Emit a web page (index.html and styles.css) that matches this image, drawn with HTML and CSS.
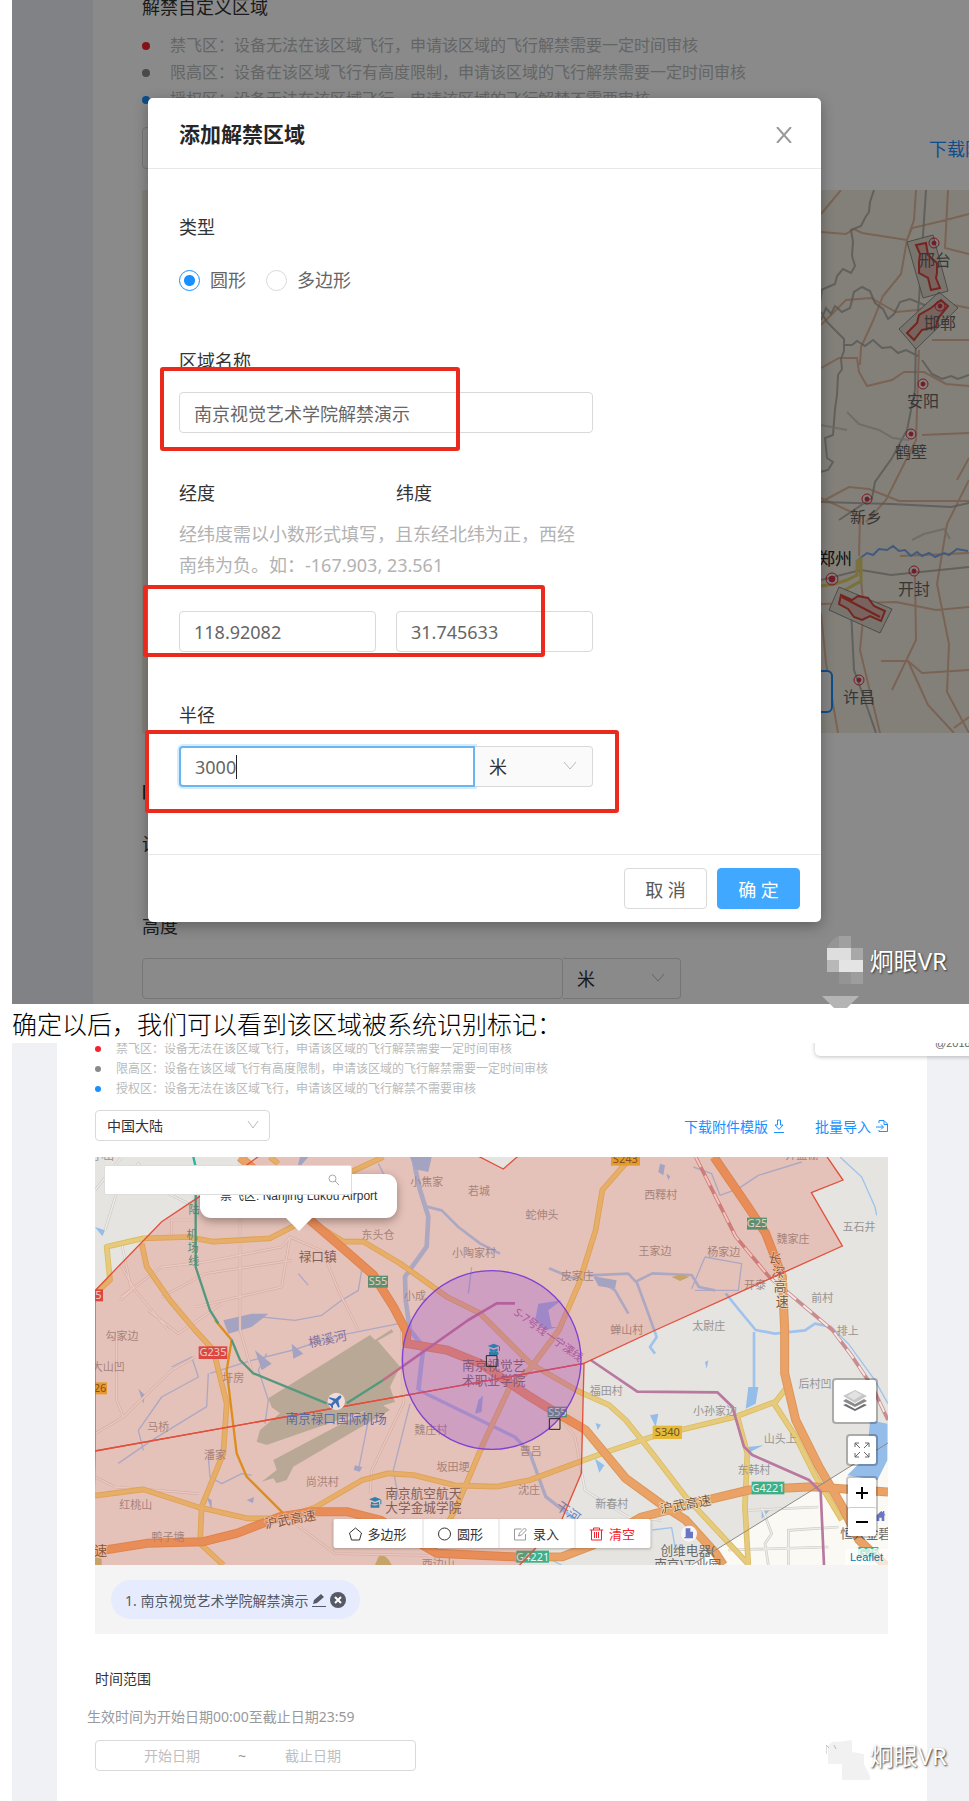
FILE: index.html
```html
<!DOCTYPE html>
<html lang="zh-CN">
<head>
  <meta charset="UTF-8" />
  <meta name="viewport" content="width=device-width, initial-scale=1.0"/>
  <title>解禁申请教程</title>
  <link rel="stylesheet" href="styles.css">
</head>
<body>
  <article>
    <!-- Step 1: add area dialog -->
    <section class="shot shot-large">
      <div class="page">
        <h2>解禁自定义区域</h2>
        <ul class="zones">
          <li class="red">禁飞区：设备无法在该区域飞行，申请该区域的飞行解禁需要一定时间审核</li>
          <li class="gray">限高区：设备在该区域飞行有高度限制，申请该区域的飞行解禁需要一定时间审核</li>
          <li class="blue">授权区：设备无法在该区域飞行，申请该区域的飞行解禁不需要审核</li>
        </ul>
        <div class="toolbar">
          <div class="select-wrap"><select aria-label="国家地区"><option>中国大陆</option></select></div>
          <a href="#">下载附件模版
            <svg width="16" height="16" viewBox="0 0 16 16" fill="none" stroke="currentColor"><path d="M6 1h4v6h3l-5 5-5-5h3zM3 15h10"/></svg>
          </a>
        </div>
        <svg class="map-back" viewBox="0 0 917 543" preserveAspectRatio="xMinYMin slice">
          <rect width="917" height="543" fill="#f2ede1"/>
          <g fill="none" stroke="#dca583" stroke-width="2" stroke-opacity=".75">
            <path d="M679 42l25 2 8-5 8 4 45 7M774 0l-2 30-7 20-6 34-18 22-10 25-12 26-1 18M679 24l20-24M806 0l-3 58 24 6M765 50l5-12 30-7 27-7M679 135l25-25 25-2 25 14 22-2 20-8 31 6M679 178l18-10h18l2 14 8 14 25-6 12-8h20l22 12 23 2M790 150l37 0M780 245l47-2M815 290l12-22M679 312l28-15 20 2 30 12 70 0M758 366l69-3M717 366l1-40-39-18M679 414l75-2 40 8 33-3M750 500l24-50-1-64M827 290l-22 44-10 60 12 60-2 48 22 41M696 543l-12-70-5-50M717 370l5 50-4 40 20 83M739 471h27l14 12 47-3M766 471l20 44 26 28M777 160l-3 90-30 60-20 22M812 538l15-11"/>
          </g>
          <g fill="none" stroke="#a5a39c" stroke-width="2" stroke-opacity=".8">
            <path d="M732 0l-4 12-1 10-4 6-4 8-10 4 2 12-1 14 3 10-4 7-8-4-6 7-2 8-14 6M679 130l5-12 5 6 4-8 7 6 8-4 4-16 8-5 8 4 5 12 8 6 5 10 6-5 6-12 10-3 12 5 8 3M679 122l6 10 8 8 9 9 0 12-3 8 1 10-4 6-1 20-2 14-2 26-8 3 2 20 6 4-5 8-8 2M702 155l8 0 5-4 8 5 8-6 9 8 9-1 7 6 8-3 12 6M784 0l-4 60-3 50-3 30-1 60-8 40-15 28-17 24-3 16-33 22M679 312l70 2 60 3 18-4M679 390l40-10 30 5 78-8M709 420l3 60 10 28 12 35M780 170l10 14 10 5 9-3 7 3 11-4M680 100l-2 12"/>
            <path d="M705 222l12 12 20 6 14 8 16 2M679 235l26 5M770 350l12-6 20-5 6 10" stroke="#c4c2ba"/>
          </g>
          <path d="M717 369l8-6 6 2 6-6 8 1 6-4 6 5 6-1 6 6 6-4 5 4 7-3 6 4 9-4 5 2 8-6 11 2" fill="none" stroke="#7aa7e8" stroke-width="2"/>
          <path d="M679 396l14-2 12-4 10-5v-14l4-2v22l-18 10" fill="none" stroke="#e2cf6a" stroke-width="3"/>
          <g fill="#ddd8cc" stroke="#8c8c86" stroke-width="1">
            <path d="M765 52l26-7 15 56-25 7zM757 139l40-37 19 16-42 41zM697 397l53 22-12 24-51-23z"/>
          </g>
          <g fill="#dfb8ae" stroke="#d8453c" stroke-width="2">
            <path d="M774 55l10-2 2 12 9 8v10l-1 5 4 10-9 2-3-12-9-5V72l1-8z"/>
            <path d="M799 110l7 6-9 11-3 10-14 3-8 10-7-7 10-10 2-8 12-7z"/>
            <path d="M699 405l11 5 6-4 10 2 6 8 11 5-4 10-11-5-8 4-8-3-6-8-9-5zM700 407l38 20"/>
          </g>
          <g fill="#d9304c" stroke="#d9304c">
            <g fill="none" stroke-width="1"><circle cx="792" cy="53" r="5"/><circle cx="798" cy="116" r="5"/><circle cx="781" cy="194" r="5"/><circle cx="769" cy="244" r="5"/><circle cx="725" cy="309" r="5"/><circle cx="690" cy="389" r="6"/><circle cx="772" cy="381" r="5"/><circle cx="717" cy="490" r="5"/></g>
            <circle cx="792" cy="53" r="2"/><circle cx="798" cy="116" r="2"/><circle cx="781" cy="194" r="2"/><circle cx="769" cy="244" r="2"/><circle cx="725" cy="309" r="2"/><circle cx="690" cy="389" r="3"/><circle cx="772" cy="381" r="2"/><circle cx="717" cy="490" r="2"/>
          </g>
          <g class="city">
            <text x="793" y="76">邢台</text><text x="798" y="139">邯郸</text><text x="781" y="217">安阳</text><text x="769" y="268">鹤壁</text>
            <text x="724" y="333">新乡</text><text x="693" y="375" class="capital">郑州</text><text x="772" y="405">开封</text><text x="717" y="513">许昌</text>
          </g>
          <rect x="400" y="481" width="290" height="41" rx="5" fill="#f4f4f4" stroke="#1890ff" stroke-width="2"/>
        </svg>
        <h3 class="bold">时间范围</h3>
        <p class="note">设</p>
        <h3 class="height-label"><label for="height">高度</label></h3>
        <div class="group height-group">
          <input id="height" type="text">
          <div class="select-wrap unit">
            <select aria-label="高度单位"><option>米</option></select>
            <svg class="chevron" viewBox="0 0 14 14"><path d="M1 3l6 7 6-7"/></svg>
          </div>
        </div>
      </div>

      <div class="mask">
        <form class="modal">
          <header>
            <h1>添加解禁区域</h1>
            <button type="button" class="close" aria-label="关闭"><svg width="16" height="16" viewBox="0 0 16 16"><path d="M1 0l14 16M15 0L1 16"/></svg></button>
          </header>
          <div class="modal-body">
            <div class="label">类型</div>
            <div class="radios">
              <label><input type="radio" name="shape" checked>圆形</label>
              <label><input type="radio" name="shape">多边形</label>
            </div>
            <label class="label name-label" for="area">区域名称</label>
            <input id="area" type="text" value="南京视觉艺术学院解禁演示">
            <div class="coords coord-labels">
              <label class="label" for="lng">经度</label>
              <label class="label" for="lat">纬度</label>
            </div>
            <p class="help">经纬度需以小数形式填写，且东经北纬为正，西经南纬为负。如：-167.903, 23.561</p>
            <div class="coords">
              <input id="lng" type="text" value="118.92082">
              <input id="lat" type="text" value="31.745633">
            </div>
            <label class="label radius-label" for="radius">半径</label>
            <div class="group">
              <div class="radius"><input id="radius" type="text" value="3000"><span class="caret"></span></div>
              <div class="select-wrap unit">
                <select aria-label="半径单位"><option>米</option></select>
                <svg class="chevron" viewBox="0 0 14 14"><path d="M1 3l6 7 6-7"/></svg>
              </div>
            </div>
          </div>
          <footer>
            <button type="button">取 消</button>
            <button type="button" class="primary">确 定</button>
          </footer>
          <span class="mark mark-name"></span>
          <span class="mark mark-coords"></span>
          <span class="mark mark-radius"></span>
        </form>
      </div>
    </section>
    <div class="watermark watermark-top">
      <svg width="42" height="72" viewBox="0 0 42 72">
        <path d="M5 12Q10 2 17 0v12z" fill="#959595"/><path d="M17 0h12v12H17z" fill="#a0a0a0"/>
        <path d="M5 12h24v12H5z" fill="#dedede"/><path d="M29 12h12v12H29z" fill="#a8a8a8"/>
        <path d="M5 24h12v12H5z" fill="#b8b8b8"/><path d="M17 24h24v12H17z" fill="#e4e4e4"/>
        <path d="M17 36h12v12H17z" fill="#949494"/><path d="M29 36h12v12H29z" fill="#9d9d9d"/>
        <path d="M0 60h37L25 72H12z" fill="#b4b4b4"/>
      </svg>
      <span>炯眼VR</span>
    </div>

    <p class="caption">确定以后，我们可以看到该区域被系统识别标记：</p>

    <!-- Step 2: area marked on the map -->
    <section class="shot shot-small">
      <div class="page">
        <ul class="zones">
          <li class="red">禁飞区：设备无法在该区域飞行，申请该区域的飞行解禁需要一定时间审核</li>
          <li class="gray">限高区：设备在该区域飞行有高度限制，申请该区域的飞行解禁需要一定时间审核</li>
          <li class="blue">授权区：设备无法在该区域飞行，申请该区域的飞行解禁不需要审核</li>
        </ul>
        <div class="toolbar">
          <div class="select-wrap">
            <select aria-label="国家地区"><option>中国大陆</option></select>
            <svg class="chevron" viewBox="0 0 14 14"><path d="M2 3l5 7 5-7"/></svg>
          </div>
          <div class="links">
            <a href="#">下载附件模版
              <svg width="12" height="14" viewBox="0 0 12 14" fill="none" stroke="currentColor"><path d="M4.500 1h3v5H10L6 10.500 2 6h2.500zM1 13.500h10"/></svg>
            </a>
            <a href="#">批量导入
              <svg width="12" height="14" viewBox="0 0 12 14" fill="none" stroke="currentColor"><path d="M3 4V1.500h5l3.500 3.500v7.500H3V11M8 2v3.500h3M0 8h7M5 5.500L7.500 8 5 10.500"/></svg>
            </a>
          </div>
        </div>

        <div class="map">
          <svg class="tiles" viewBox="0 0 2379 1224" preserveAspectRatio="xMidYMid slice">
            <defs>
              <path id="roads" d="M0 410L45 369 35 269 145 244 280 240 355 254 525 244 620 195M140 259L155 329 225 430 300 519 355 579 395 739 385 889 320 1049 315 1159 385 1224M625 179L745 254 805 254 915 319 1055 419 1155 469 1305 619 1452 704 1542 744 1592 789 1672 889 1772 1019 1962 1224M1592 19L1522 99 1502 219 1452 379 1392 519 1302 639 1245 689 1165 859 1085 1049 1010 1190M0 1016L145 997 305 1049 455 1084 555 1084 655 1054 800 970 880 949 955 954 1080 985 1205 989 1305 969 1522 889 1672 839 1922 779 2042 734 2085 679M2037 739L2102 839 2162 959 2240 1089M1927 779L1957 889 1950 1050 1960 1224M770 44L865 0M525 0L550 20"/>
              <path id="highways" d="M435 0L475 35 645 189 755 284 835 354 895 449 935 525 935 560 1055 579 1155 619 1305 719 1362 754 1472 819 1592 964 1702 1044 1772 1089 1862 1189 1885 1224M1857 0L1952 139 2012 229 2062 359 2069 519V649L2102 789 2172 929 2242 1049 2292 1149 2379 1232M0 1184L155 1159 325 1154 425 1129 555 1079 655 1064 755 1064 855 1089 1025 1189 1265 1200 1402 1199 1492 1165 1640 1080 1857 1024 1962 999 2152 989 2379 1005"/>
            </defs>
            <rect width="2379" height="1224" fill="#e5e4e0"/>
            <path d="M2379 858L1862 1179 1790 1224H2379z" fill="#fbf9f4"/>
            <!-- airport ground -->
            <path fill="#afc4b4" d="M520 724L825 534 840 549 890 517 895 525 848 551 915 629 885 689 900 735 800 765 515 864 485 854 495 819 555 769 530 751zM500 974L545 939 535 909 855 739 885 759 595 929 575 969 545 979 535 964z"/>
            <!-- water -->
            <g fill="none" stroke="#9fc3ec" stroke-width="8" stroke-linejoin="round">
              <path stroke-width="14" d="M955 0L962 40 975 99 1000 179 995 269 930 359 932 430 945 519 985 570 970 699"/>
              <path stroke-width="10" d="M970 699L1155 789 1260 840 1305 889 1352 1019 1442 1089"/>
              <path d="M995 149L1040 160 1090 210 1155 259 1215 290M1362 334L1440 366M1480 355L1600 350 1622 374 1672 349 1790 354 1812 390 1860 400M1892 409L1925 450 1982 519 2040 530 2130 520 2160 500 2210 510M1500 360L1560 400 1600 470M1625 375L1660 470 1685 540 1665 570 1680 590M1977 525V700"/>
              <path stroke-width="4" d="M345 649L470 610 595 579 715 539 915 499M70 919L170 850 335 749 340 649M515 589L490 639 520 729 510 800M340 900L345 960 380 980 440 950 470 955M945 740L895 940 910 1020M820 790L790 940M2235 0L2300 60 2340 150 2345 175M2210 510L2260 560 2340 670 2379 740M1310 1179L1400 1224M1672 1119L1730 1112 1740 1170M500 480L600 490 680 475 740 430 790 400 800 340M610 350L640 385M1130 330L1120 410M850 20L870 60M1795 30L1850 50 1875 115 1930 95 1990 55 2120 15M1790 395L1830 300 1940 320 1930 400 1800 400M230 630L290 600 310 660 200 720 130 820 145 880"/>
            </g>
            <g fill="#94bdea">
              <path d="M385 490L470 470 520 470 470 510 400 530zM1330 440L1400 430 1360 460 1370 510 1390 510 1350 520 1320 490zM945 0h65l-10 45-40-8zM1495 358l70 12-5 25-50-8zM480 580l50 40-30 20zM590 560l35 30-30 15zM130 695l20 20-5 25zM335 1020l15 10v30zM780 925l22 5-8 14-18-5zM1960 690l30 0-8 50-30 15zM1665 775l25-5-8 40zM1500 905l28 20-15 22zM1502 798l16 5-10 16zM1830 615l10-5-5 25zM1960 870l45-5-40 20zM2000 1060l25-2-25 28zM2325 790l52 10v110l-30 60-90-15 60-60zM1695 20l15 5-5 30-15-10zM1714 50l12 8-6 12zM0 210l30 10-8 18zM1150 730l14-15-4 50-20 5zM455 1030l22-10-3 18zM615 0l25 0-35 40z"/>
            </g>
            <path d="M1730 360l28-8 25 8-28 12zM0 1200l20 5v19H0zM850 1200q20-15 40 24h-50z" fill="#bdbd7c"/>
            <!-- small streets -->
            <g fill="none" stroke="#cfcbc6" stroke-width="8">
              <path id="streets" d="M0 100L80 0M70 90L30 220M70 90L130 20 180 90 300 150M435 0V519L470 640M230 244v-55h70M80 260L110 400 75 430M75 320L120 400 220 519M80 419L200 330 330 315 560 270 585 240M200 420L330 350 590 310M300 450L560 390 585 240 700 290M690 300L730 400 790 519M65 519L65 730 85 780 0 830M85 780L230 640 300 600M160 460L250 530 380 440M0 960l60 30 250 20M560 1069L720 1190 1000 1195M920 519L925 740 830 940 825 1010M1380 760L1440 840 1470 1000 1600 1080 1700 1090M2000 1050L2030 1130 2010 1160 2020 1224M2080 1224V1120L2230 1110M1960 1060L2170 1050M1900 1179L2200 1170"/>
            </g>
            <use href="#streets" fill="none" stroke="#eeecea" stroke-width="4"/>
            <!-- provincial roads and highways -->
            <use href="#roads" class="road-edge"/>
            <use href="#roads" class="road"/>
            <use href="#highways" class="highway-edge"/>
            <use href="#highways" class="highway"/>
            <!-- rail and metro -->
            <g fill="none" stroke-linejoin="round">
              <path d="M1802 0L1872 139 1922 239 2022 359 2212 519 2272 599 2332 689 2379 789" stroke="#c98d90" stroke-width="11"/>
              <path d="M1802 0L1872 139 1922 239 2022 359 2212 519 2272 599 2332 689 2379 789" stroke="#f3e9e6" stroke-width="6" stroke-dasharray="34 28"/>
              <path d="M360 489L410 549 395 640 425 889 455 959 565 1069" stroke="#dda21c" stroke-width="7"/>
              <path d="M295 0L302 30V330L345 460 370 499M410 549L435 609 475 649 695 739M755 739L865 669" stroke="#30b096" stroke-width="7"/>
              <path d="M865 669L1120 489 1205 439H1260M1487 609L1627 704 1867 706 1912 749 1947 869 1972 894 2142 969 2177 1004 2187 1224" stroke="#b9789f" stroke-width="8"/>
            </g>
            <g class="village">
              <text x="995" y="88">小焦家</text><text x="1152" y="113">若城</text><text x="849" y="247">东头仓</text><text x="1137" y="300">小陶家村</text><text x="960" y="428">小成</text>
              <text x="1341" y="187">蛇伸头</text><text x="1697" y="125">西釋村</text><text x="1680" y="294">王家边</text><text x="1886" y="298">杨家边</text><text x="2094" y="259">魏家庄</text><text x="2292" y="222">五石井</text>
              <text x="1447" y="368">皮家庄</text><text x="1980" y="396">开泰</text><text x="2182" y="435">前村</text><text x="1595" y="531">蝉山村</text><text x="1841" y="519">太尉庄</text><text x="2258" y="534">排上</text>
              <text x="81" y="548">勾家边</text><text x="40" y="643">大山凹</text><text x="415" y="676">圩房</text><text x="190" y="823">马桥</text><text x="360" y="905">潘家</text><text x="1007" y="831">魏庄村</text><text x="1074" y="941">坂田埂</text>
              <text x="682" y="988">尚洪村</text><text x="122" y="1056">红桃山</text><text x="219" y="1152">鸭子塘</text><text x="1302" y="1012">沈庄</text><text x="1307" y="894">曹吕</text><text x="1534" y="713">福田村</text><text x="1860" y="774">小孙家边</text>
              <text x="2160" y="692">后村凹</text><text x="2056" y="859">山头上</text><text x="1977" y="950">东韩村</text><text x="1550" y="1052">新春村</text><text x="1030" y="1234">西边山</text><text x="2120" y="6">井盖棚</text><text x="25" y="10">小山</text>
            </g>
            <g class="town">
              <text x="668" y="311">禄口镇</text><text x="985" y="1022">南京航空航天</text><text x="985" y="1066">大学金城学院</text>
              <text x="1196" y="640">南京视觉艺</text><text x="1196" y="684">术职业学院</text><text x="1778" y="1193">创维电器(</text><text x="1778" y="1236">南京)工业园</text><text x="2312" y="1142">恒大金碧</text>
            </g>
            <g class="roadname">
              <text x="588" y="1101" transform="rotate(-10 588 1101)">沪武高速</text><text x="1774" y="1056" transform="rotate(-10 1774 1056)">沪武高速</text>
              <text x="2037" y="318" transform="rotate(12 2037 318)">长</text><text x="2048" y="360" transform="rotate(8 2048 360)">深</text><text x="2056" y="402">高</text><text x="2062" y="448">速</text><text x="17" y="1193">速</text>
            </g>
            <g class="metro"><text x="297" y="172">陆</text><text x="291" y="246">机</text><text x="294" y="286">场</text><text x="296" y="324">线</text></g>
            <text class="river" x="698" y="560" transform="rotate(-12 698 546)">横溪河</text>
            <text class="river" x="1412" y="1076" transform="rotate(35 1412 1076)">干河</text>
            <text class="line-name" x="1360" y="545" transform="rotate(36 1360 535)">S-7号线一宁溧线</text>
            <!-- road shields -->
            <g>
              <rect x="819" y="356" width="60" height="36" fill="#3da385"/><rect x="1956" y="182" width="60" height="36" fill="#3da385"/><rect x="1358" y="749" width="58" height="32" fill="#3da385"/><rect x="1970" y="974" width="98" height="38" fill="#3daf8b"/><rect x="1264" y="1181" width="98" height="36" fill="#3daf8b"/><rect x="2290" y="1170" width="60" height="30" fill="#3daf8b"/>
              <rect x="311" y="568" width="86" height="38" fill="#dc4a4a"/><rect x="-30" y="397" width="54" height="36" fill="#dc4a4a"/><rect x="1548" y="-10" width="87" height="36" fill="#e7b22d"/><rect x="1673" y="806" width="88" height="40" fill="#e7b938"/><rect x="-30" y="676" width="66" height="36" fill="#e7b22d"/>
            </g>
            <g class="shield"><text x="849" y="385">S55</text><text x="1986" y="211">G25</text><text x="1387" y="776">S55</text><text x="2019" y="1005">G4221</text><text x="1313" y="1211">G4221</text><text x="2320" y="1196">G25</text><text x="354" y="598">G235</text><text x="10" y="426">5</text><g fill="#6c5528"><text x="1591" y="18">S243</text><text x="1717" y="837">S340</text><text x="15" y="705">26</text></g></g>
            <!-- no-fly zone -->
            <path d="M0 401L200 194 313 119 455 24 495-5H1145L1225 36 1272-5H2193L2244 69 2149 107 2242 267 1682 519 1467 619 0 882z" fill="#e63c1e" fill-opacity=".2" stroke="#e2503c" stroke-width="4"/>
            <path d="M0 882L1467 619 1459 949 1400 1089 1317 1179 1268 1230H-5z" fill="#e63c1e" fill-opacity=".2" stroke="#e2503c" stroke-width="4"/>
            <path d="M2379 858L1862 1179 1790 1224" fill="none" stroke="#8c8a88" stroke-width="3"/>
            <circle cx="1190" cy="609" r="268" fill="#9646dc" fill-opacity=".28" stroke="#8040d0" stroke-width="4"/>
            <g fill="none" stroke="#222" stroke-width="3"><path d="M1174 596h32v32h-32zM1363 785h32v32h-32z"/></g>
            <!-- places -->
            <circle cx="724" cy="733" r="26" fill="#efdcd8"/>
            <path d="M738 716q-4-2-9 3l-7 6-18-4-3 3 15 8-8 8-7-1-3 3 9 4 4 9 3-3v-7l8-8 8 15 4-3-4-18 7-7q4-5 1-8z" fill="#3b6fb8"/>
            <text class="airport" x="723" y="798">南京禄口国际机场</text>
            <g fill="#2f7fae"><path d="M1178 567l18-7 18 7-18 7zM1184 574v8q12 7 24 0v-8l-12 5zM1212 568h3v14h-3zM1182 584h28v10h-28z"/><path d="M822 1027l18-7 18 7-18 7zM828 1034v8q12 7 24 0v-8l-12 5zM856 1028h3v14h-3zM827 1042h26v10h-26z"/></g>
            <circle cx="1782" cy="1130" r="24" fill="#f5f5f8"/><path d="M1772 1114h14v10h8v20h-26v-4h4zM2343 1076l16-14 5 4v-4h4v8l4 5h-4v17h-8v-10h-7v10h-8v-17h-4z" fill="#6a76c4"/>
          </svg>
          <div class="popup">禁飞区: Nanjing Lukou Airport</div>
          <div class="search">
            <input type="text" aria-label="搜索地点">
            <svg width="12" height="12" viewBox="0 0 12 12"><circle cx="4.500" cy="4.500" r="3.500"/><path d="M7 7l4 4"/></svg>
          </div>
          <div class="controls">
            <button type="button" class="layers" aria-label="图层">
              <svg width="26" height="26" viewBox="0 0 26 26"><path d="M1 17l12 6 12-6-3-1-9 5-9-5z" fill="#6d6d6d"/><path d="M1 13l12 6 12-6-3-2-9 5-9-5z" fill="#8b8b8b"/><path d="M1 8l12-6 12 6-12 7z" fill="#c6c6c6"/><path d="M5 8l8-5 7 4-8 5z" fill="#e2e2e2"/></svg>
            </button>
            <button type="button" aria-label="全屏">
              <svg width="16" height="16" viewBox="0 0 16 16" fill="none" stroke="#666"><path d="M1 5V1h4M1 1l5 5M11 1h4v4M15 1l-5 5M1 11v4h4M1 15l5-5M15 11v4h-4M15 15l-5-5"/></svg>
            </button>
            <div class="zoom">
              <button type="button" aria-label="放大"><svg width="12" height="12"><path d="M0 6h12M6 0v12"/></svg></button>
              <button type="button" aria-label="缩小"><svg width="12" height="12"><path d="M0 6h12"/></svg></button>
            </div>
          </div>
          <div class="draw">
            <button type="button"><svg width="14" height="14" viewBox="0 0 14 14"><path d="M7 1l6 5-2 7H3L1 6z"/></svg>多边形</button>
            <button type="button"><svg width="14" height="14" viewBox="0 0 14 14"><circle cx="7" cy="7" r="6"/></svg>圆形</button>
            <button type="button"><svg width="14" height="14" viewBox="0 0 14 14" class="muted"><path d="M8 2H1v11h11V7M5 9l1-3 5-5 2 2-5 5z"/></svg>录入</button>
            <button type="button" class="danger"><svg width="14" height="14" viewBox="0 0 14 14"><path d="M0 3h14M4 3V1h6v2M2 3v10h10V3M5 5v6M7 5v6M9 5v6"/></svg>清空</button>
          </div>
          <a class="leaflet" href="#">Leaflet</a>
        </div>

        <div class="areas">
          <div class="chip">
            <span>1. 南京视觉艺术学院解禁演示</span>
            <button type="button" aria-label="编辑"><svg width="14" height="14" viewBox="0 0 14 14"><path d="M0 13h14v1H0zM1 11l1-4 7-6 3 3-7 6z" fill="#555a66"/></svg></button>
            <button type="button" aria-label="删除"><svg width="16" height="16" viewBox="0 0 16 16"><circle cx="8" cy="8" r="8" fill="#555a66"/><path d="M5 5l6 6M11 5l-6 6" stroke="#fff" stroke-width="2"/></svg></button>
          </div>
        </div>

        <h3>时间范围</h3>
        <p class="note">生效时间为开始日期00:00至截止日期23:59</p>
        <div class="range">
          <input type="text" placeholder="开始日期" aria-label="开始日期">
          <span>~</span>
          <input type="text" placeholder="截止日期" aria-label="截止日期">
        </div>
      </div>
      <div class="corner-card">@2018 D</div>
      <div class="watermark watermark-bottom">
        <svg width="44" height="40" viewBox="0 0 44 40"><path d="M2 6Q6 0 12 2L26 0v12l12 2v10l6 12v4H16V24H2z" fill="#f1f1f1"/><path d="M0 14V5l3 3M8 5l2 4" stroke="#bbb" fill="none"/></svg>
        <span>炯眼VR</span>
      </div>
    </section>
  </article>
</body>
</html>
```
FILE: styles.css
```css
* {
  margin: 0;
  padding: 0;
  box-sizing: border-box;
}

body {
  background: white;
  font-family: "Noto Sans", "Noto Sans CJK SC", sans-serif;
  color: #333;
}

button, input, select {
  font: inherit;
  color: inherit;
}

article {
  position: relative;
  padding-left: 12px;
}

.shot {
  position: relative;
  overflow: hidden;
  background: #eff1f5;
}

.page {
  background: white;
}

h2, h3 {
  font-weight: normal;
}

.zones {
  list-style: none;
  color: #b9bbbb;
  white-space: nowrap;
}

.zones li {
  display: flex;
  align-items: center;
}

.zones li::before {
  content: "";
  border-radius: 50%;
  background: #8a8a8a;
}

.zones .red::before {
  background: #f5222d;
}

.zones .blue::before {
  background: #1890ff;
}

.toolbar {
  display: flex;
  justify-content: space-between;
  align-items: center;
}

.toolbar a {
  display: flex;
  align-items: center;
  color: #1890ff;
  text-decoration: none;
  white-space: nowrap;
}

.select-wrap {
  position: relative;
}

.select-wrap select {
  width: 100%;
  height: 100%;
  appearance: none;
  background: none;
  border: 1px solid #d9d9d9;
  border-radius: 4px;
}

.chevron {
  position: absolute;
  top: 50%;
  right: 16px;
  width: 14px;
  height: 14px;
  margin-top: -8px;
  fill: none;
  stroke: #bbb;
  stroke-width: 1;
  pointer-events: none;
}

/* large shot */
.shot-large {
  padding-left: 81px;
  font-size: 18px;
}

.shot-large .page {
  margin-right: -90px;
  padding: 1px 0 5px 49px;
}

.shot-large h2 {
  font-size: 18px;
  line-height: 28px;
  margin-top: -8px;
}

.shot-large h3 {
  font-size: 18px;
  line-height: 28px;
  margin-top: 45px;
}

.shot-large h3.bold {
  font-weight: bold;
}

.shot-large .zones {
  margin-top: 11px;
  font-size: 16px;
  line-height: 27px;
}

.shot-large .zones li {
  gap: 20px;
}

.shot-large .zones li::before {
  width: 8px;
  height: 8px;
}

.shot-large .toolbar {
  margin-top: 14px;
}

.shot-large .toolbar .select-wrap {
  width: 235px;
  height: 42px;
}

.shot-large .toolbar select {
  padding-left: 15px;
}

.shot-large .toolbar a {
  gap: 6px;
}

.map-back {
  display: block;
  width: 100%;
  height: 543px;
  margin-top: 21px;
}

.city {
  font-size: 16px;
  fill: #666;
  text-anchor: middle;
}

.city .capital {
  font-size: 17px;
  fill: #222;
}

.shot-large .note {
  margin-top: 24px;
  line-height: 28px;
}

.shot-large .height-label {
  margin-top: 54px;
}

.group {
  display: flex;
  height: 41px;
}

.group .unit {
  width: 118px;
}

.group select {
  padding-left: 14px;
  background: #fafafa;
  border-left: 0;
  border-radius: 0 4px 4px 0;
}

.height-group {
  width: 539px;
  margin-top: 18px;
}

.height-group input {
  flex: 1;
  border-radius: 4px 0 0 4px;
}

.height-group select {
  background: none;
}

.shot-large input[type="text"] {
  min-width: 0;
  height: 41px;
  padding: 0 14px;
  border: 1px solid #d9d9d9;
  border-radius: 4px;
  background: white;
  color: #666;
}

.mask {
  position: absolute;
  inset: 0;
  padding: 98px 0 0 136px;
  background: rgba(0, 0, 0, 0.46);
}

.modal {
  position: relative;
  max-width: 673px;
  background: white;
  border-radius: 5px;
  box-shadow: 0 4px 14px rgba(0, 0, 0, 0.3);
}

.modal header {
  display: flex;
  justify-content: space-between;
  align-items: center;
  height: 71px;
  padding: 0 29px 0 31px;
  border-bottom: 1px solid #e8e8e8;
}

.modal h1 {
  font-size: 21px;
  font-weight: bold;
  color: #262626;
}

.close {
  display: flex;
  margin-top: 3px;
  background: none;
  border: none;
  cursor: pointer;
}

.close path {
  stroke: #999;
  stroke-width: 2;
}

.modal-body {
  padding: 44px 31px 67px;
}

.label {
  display: block;
  line-height: 28px;
  color: #333;
}

.radios {
  display: flex;
  gap: 20px;
  margin-top: 25px;
  line-height: 28px;
  color: #666;
}

.radios label {
  display: flex;
  align-items: center;
  gap: 10px;
}

.radios input {
  appearance: none;
  width: 21px;
  height: 21px;
  border: 1px solid #d9d9d9;
  border-radius: 50%;
}

.radios input:checked {
  border: 1px solid #1890ff;
  background: radial-gradient(#1890ff 5px, white 6px);
}

.name-label {
  margin-top: 53px;
  margin-bottom: 17px;
}

.modal-body > input[type="text"] {
  display: block;
  width: 414px;
}

.coords {
  display: grid;
  grid-template-columns: 197px 197px;
  gap: 20px;
}

.coord-labels {
  margin-top: 46px;
}

.help {
  width: 404px;
  margin: 12px 0 30px;
  line-height: 31px;
  color: #b2b2b2;
}

.radius-label {
  margin-top: 49px;
  margin-bottom: 17px;
}

.modal .group {
  width: 414px;
}

.radius {
  position: relative;
  flex: 1;
}

.shot-large .radius input {
  width: 100%;
  border: 2px solid #69b5f2;
  border-radius: 4px 0 0 4px;
  box-shadow: 0 0 0 2px #d5ecff;
}

.caret {
  position: absolute;
  top: 9px;
  left: 57px;
  width: 1px;
  height: 24px;
  background: #222;
}

.modal footer {
  display: flex;
  justify-content: flex-end;
  gap: 10px;
  padding: 13px 21px;
  border-top: 1px solid #e8e8e8;
}

.modal footer button {
  width: 83px;
  height: 41px;
  background: white;
  border: 1px solid #d9d9d9;
  border-radius: 4px;
  color: #595959;
}

.modal footer .primary {
  background: #40a9ff;
  border-color: #40a9ff;
  color: white;
}

/* hand drawn highlights */
.mark {
  position: absolute;
  border: 4px solid #ea2a1d;
  border-radius: 3px;
  pointer-events: none;
}

.mark-name {
  top: 269px;
  left: 12px;
  width: 300px;
  height: 84px;
}

.mark-coords {
  top: 487px;
  left: -5px;
  width: 402px;
  height: 72px;
}

.mark-radius {
  top: 632px;
  left: -3px;
  width: 474px;
  height: 83px;
}

.watermark {
  position: absolute;
  display: flex;
  font-size: 24px;
  line-height: 32px;
  color: white;
  text-shadow: 1px 1px 2px #333;
}

.watermark-top {
  top: 936px;
  right: 22px;
  gap: 6px;
}

.watermark-top span {
  margin-top: 9px;
}

.watermark-bottom {
  right: 22px;
  bottom: 21px;
  gap: 0;
}

.caption {
  font-family: "Noto Sans CJK SC", sans-serif;
  font-size: 25px;
  font-weight: 300;
  line-height: 39px;
  color: #000;
}

/* small shot */
.shot-small {
  padding: 0 42px 0 45px;
  font-size: 14px;
}

.shot-small .page {
  padding: 0 39px 30px 38px;
}

.shot-small .zones {
  margin-top: -4px;
  font-size: 12px;
  line-height: 20px;
}

.shot-small .zones li {
  gap: 15px;
}

.shot-small .zones li::before {
  width: 6px;
  height: 6px;
}

.shot-small .toolbar {
  margin-top: 11px;
}

.shot-small .toolbar .select-wrap {
  width: 175px;
  height: 31px;
}

.shot-small .toolbar select {
  padding-left: 11px;
}

.shot-small .chevron {
  right: 10px;
}

.links {
  display: flex;
  gap: 30px;
}

.links a {
  gap: 5px;
}

.map {
  position: relative;
  height: 408px;
  margin-top: 16px;
  overflow: hidden;
}

.tiles {
  display: block;
  width: 100%;
  height: 100%;
}

.tiles text {
  text-anchor: middle;
}

.road, .road-edge, .highway, .highway-edge {
  fill: none;
  stroke-linejoin: round;
}

.road {
  stroke: #e6cb7c;
  stroke-width: 12px;
}

.road-edge {
  stroke: #dcbb62;
  stroke-width: 17px;
}

.highway {
  stroke: #eaa267;
  stroke-width: 21px;
}

.highway-edge {
  stroke: #dc965a;
  stroke-width: 27px;
}

.village {
  font-size: 33px;
  fill: #969494;
}

.town {
  font-size: 38px;
  fill: #686868;
}

.roadname {
  font-size: 39px;
  fill: #755a3e;
  paint-order: stroke;
  stroke: #f1e3d0;
  stroke-width: 4px;
}

.metro {
  font-size: 33px;
  fill: #30a08c;
}

.river {
  font-size: 39px;
  fill: #6a83c0;
}

.line-name {
  font-size: 33px;
  fill: #a86a9a;
}

.shield {
  font-size: 33px;
  fill: #e8f4ee;
}

.airport {
  font-size: 38px;
  fill: #5a6aa6;
}

.popup {
  position: absolute;
  top: 17px;
  left: 105px;
  padding: 12px 20px;
  background: white;
  border-radius: 11px;
  box-shadow: 0 3px 10px rgba(0, 0, 0, 0.35);
  font-family: "Liberation Sans", "Noto Sans CJK SC", sans-serif;
  font-size: 12px;
  line-height: 20px;
  white-space: nowrap;
}

.popup::after {
  content: "";
  position: absolute;
  top: 100%;
  left: 50%;
  margin-left: -13px;
  border: 13px solid transparent;
  border-top-color: white;
  border-bottom: 0;
}

.search {
  position: absolute;
  top: 8px;
  left: 9px;
  display: flex;
  align-items: center;
  width: 248px;
  height: 30px;
  padding-right: 11px;
  background: white;
  border: 1px solid #ddd;
  border-radius: 2px;
}

.search input {
  flex: 1;
  min-width: 0;
  padding-left: 8px;
  border: none;
  outline: none;
}

.search svg {
  fill: none;
  stroke: #aaa;
}

.controls {
  position: absolute;
  top: 221px;
  right: 10px;
  display: flex;
  flex-direction: column;
  align-items: flex-end;
  gap: 10px;
}

.controls button {
  display: flex;
  justify-content: center;
  align-items: center;
  width: 32px;
  height: 32px;
  background: white;
  border: 2px solid rgba(0, 0, 0, 0.25);
  background-clip: padding-box;
  border-radius: 4px;
}

.controls .layers {
  width: 46px;
  height: 46px;
}

.zoom {
  border: 2px solid rgba(0, 0, 0, 0.2);
  border-radius: 4px;
}

.controls .zoom button {
  width: 28px;
  height: 29px;
  border: none;
  border-radius: 2px;
}

.controls .zoom button + button {
  border-top: 1px solid #ccc;
}

.zoom path {
  stroke: #000;
  stroke-width: 2;
}

.draw {
  position: absolute;
  bottom: 17px;
  left: 50%;
  display: flex;
  transform: translateX(-50%);
  background: white;
  border-radius: 2px;
  box-shadow: 0 1px 3px rgba(0, 0, 0, 0.25);
}

.draw button {
  display: flex;
  justify-content: center;
  align-items: center;
  gap: 5px;
  height: 29px;
  width: 76px;
  background: none;
  border: none;
  border-left: 1px solid #ddd;
  font-size: 13px;
  white-space: nowrap;
}

.draw button:first-child {
  width: 89px;
  border-left: none;
}

.draw svg {
  fill: none;
  stroke: currentColor;
}

.draw .muted {
  stroke: #999;
}

.draw .danger {
  color: #f5222d;
}

.leaflet {
  position: absolute;
  right: 0;
  bottom: 0;
  padding: 0 5px;
  background: rgba(255, 255, 255, 0.7);
  font-family: "Liberation Sans", Arial, sans-serif;
  font-size: 11px;
  line-height: 16px;
  color: #0078a8;
  text-decoration: none;
}

.areas {
  display: flex;
  padding: 15px 16px;
  background: #f4f4f4;
}

.chip {
  display: flex;
  align-items: center;
  gap: 4px;
  height: 39px;
  padding: 0 14px;
  background: #e6ecfd;
  border-radius: 20px;
  color: #555a66;
}

.chip button {
  display: flex;
  background: none;
  border: none;
}

.shot-small h3 {
  margin-top: 35px;
  font-size: 14px;
  line-height: 20px;
}

.shot-small .note {
  margin: 18px 0 13px -8px;
  line-height: 20px;
  color: #999;
}

.range {
  display: flex;
  align-items: center;
  width: 321px;
  height: 31px;
  padding: 0 48px;
  border: 1px solid #d9d9d9;
  border-radius: 4px;
  color: #999;
}

.range input {
  width: 94px;
  border: none;
  background: none;
}

.range span {
  flex: none;
  width: 47px;
}

.range input:last-child {
  flex: 1;
  min-width: 0;
}

.range ::placeholder {
  color: #bfbfbf;
}

.corner-card {
  position: absolute;
  top: -30px;
  right: -20px;
  width: 174px;
  height: 43px;
  padding: 22px 0 0 120px;
  background: white;
  border-radius: 5px;
  box-shadow: 0 1px 4px rgba(0, 0, 0, 0.25);
  font-family: "Liberation Sans", Arial, sans-serif;
  font-size: 11px;
  line-height: 16px;
  color: #666;
}
```
